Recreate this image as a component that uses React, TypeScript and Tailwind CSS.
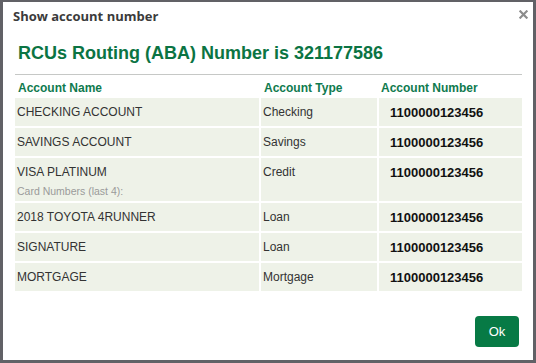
const accounts = [
  { name: 'CHECKING ACCOUNT', type: 'Checking', number: '1100000123456' },
  { name: 'SAVINGS ACCOUNT', type: 'Savings', number: '1100000123456' },
  { name: 'VISA PLATINUM', type: 'Credit', number: '1100000123456', note: 'Card Numbers (last 4):' },
  { name: '2018 TOYOTA 4RUNNER', type: 'Loan', number: '1100000123456' },
  { name: 'SIGNATURE', type: 'Loan', number: '1100000123456' },
  { name: 'MORTGAGE', type: 'Mortgage', number: '1100000123456' },
]

const App = () => {
  return (
    <div className="h-[363px] w-[536px] border-x-[3px] border-t-2 border-b-[3px] border-[#616166] bg-white font-['Liberation_Sans',Arial,sans-serif]">
      <div className="flex h-full flex-col">
        <div className="flex items-start justify-between pl-[10px] pr-[5px] pt-[5px]">
          <h1 className="font-['Open_Sans',sans-serif] text-[13px] font-bold leading-[18px] text-[#3b3b3b]">
            Show account number
          </h1>
          <button className="mt-[2px] flex h-[10px] w-[10px] items-center justify-center" aria-label="Close">
            <svg viewBox="0 0 10 10" className="h-[9px] w-[9px]">
              <path d="M1.5 1.5 L8.5 8.5 M8.5 1.5 L1.5 8.5" stroke="#8c8c8c" strokeWidth="2.4" strokeLinecap="square" />
            </svg>
          </button>
        </div>

        <div className="px-[12px]">
          <h2 className="mt-[17px] pl-[3px] text-[18px] font-bold leading-[22px] text-[#0b7443]">
            RCUs Routing (ABA) Number is 321177586
          </h2>
          <div className="mt-[10px] h-px w-[507px] bg-[#c6c8c6]" />

          <div className="mt-[5px] grid grid-cols-[244px_116px_143px] gap-[2px] text-[12px]">
            <div className="pl-[3px] font-bold leading-[16px] text-[#0f7a4e]">Account Name</div>
            <div className="pl-[3px] font-bold leading-[16px] text-[#0f7a4e]">Account Type</div>
            <div className="pl-[2px] font-bold leading-[16px] text-[#0f7a4e]">Account Number</div>

            {accounts.map((a) => (
              <div key={a.name} className="contents">
                <div className={`bg-[#eef2e8] pl-[2px] pt-[6px] ${a.note ? 'h-[43px]' : 'h-[28px]'}`}>
                  <div className="leading-[16px] text-[#333]">{a.name}</div>
                  {a.note && <div className="mt-[4px] text-[10.5px] leading-[14px] text-[#9a9a9a]">{a.note}</div>}
                </div>
                <div className="bg-[#eef2e8] pl-[2px] pt-[6px] leading-[16px] text-[#333]">{a.type}</div>
                <div className="bg-[#eef2e8] pl-[11px] pt-[7px] text-[13px] font-bold leading-[16px] text-[#111]">
                  {a.number}
                </div>
              </div>
            ))}
          </div>
        </div>

        <div className="mt-auto flex justify-end pb-[13px] pr-[14px]">
          <button className="h-[31px] w-[44px] rounded-[4px] bg-[#077a45] text-[13px] text-white">Ok</button>
        </div>
      </div>
    </div>
  )
}

export default App
